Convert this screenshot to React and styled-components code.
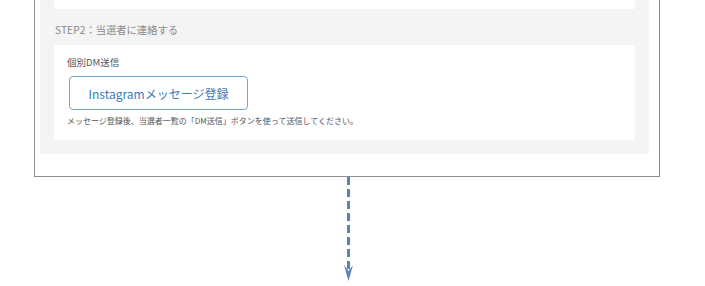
import styled, { createGlobalStyle } from "styled-components";

const Global = createGlobalStyle`
  *, *::before, *::after {
    box-sizing: border-box;
  }
  html, body {
    margin: 0;
    padding: 0;
    background: #fff;
    font-family: "Noto Sans CJK JP", "Noto Sans", sans-serif;
  }
`;

const Page = styled.div`
  width: 705px;
  height: 286px;
  display: flex;
  flex-direction: column;
  overflow: hidden;
`;

const Frame = styled.div`
  margin-left: 34px;
  width: 626px;
  border: 1px solid #8e8e8e;
  border-top: none;
  padding: 0 10px 22px 5px;
`;

const Panel = styled.div`
  background: #f4f4f4;
  padding: 0 14px 14px;
  display: flex;
  flex-direction: column;
`;

const Card = styled.div`
  background: #fff;
  height: ${(p) => p.$height || "auto"};
  padding: ${(p) => p.$padding || "0"};
  display: flex;
  flex-direction: column;
  align-items: flex-start;
`;

const StepTitle = styled.div`
  font-size: 10.3px;
  color: #8a8a8a;
  line-height: 16px;
  padding: 13px 0 7px 1px;
`;

const Label = styled.div`
  font-size: 9.5px;
  color: #555;
  line-height: 14px;
`;

const RegisterButton = styled.button`
  margin: 7px 0 0 2px;
  width: 179px;
  height: 34px;
  border: 1px solid #73a8d0;
  border-radius: 4px;
  background: #fff;
  color: #3b7bb6;
  font-family: "Noto Sans CJK JP", "Noto Sans", sans-serif;
  font-size: 12px;
  padding: 0;
`;

const Note = styled.div`
  margin-top: 5px;
  font-size: 8px;
  color: #555;
  line-height: 12px;
`;

const ArrowWrap = styled.div`
  margin-left: 343px;
  width: 11px;
`;

export default function App() {
  return (
    <Page>
      <Global />
      <Frame>
        <Panel>
          <Card $height="9px" />
          <StepTitle>STEP2：当選者に連絡する</StepTitle>
          <Card $padding="10px 13px 13px">
            <Label>個別DM送信</Label>
            <RegisterButton>Instagramメッセージ登録</RegisterButton>
            <Note>
              メッセージ登録後、当選者一覧の「DM送信」ボタンを使って送信してください。
            </Note>
          </Card>
        </Panel>
      </Frame>
      <ArrowWrap>
        <svg width="11" height="106" viewBox="0 0 11 106">
          <line
            x1="5.5"
            y1="0"
            x2="5.5"
            y2="96"
            stroke="#5a82c2"
            strokeWidth="3"
            strokeDasharray="8 4"
          />
          <path d="M1 88 L5.5 104 L10 88 L5.5 94 Z" fill="#5a82c2" />
        </svg>
      </ArrowWrap>
    </Page>
  );
}
